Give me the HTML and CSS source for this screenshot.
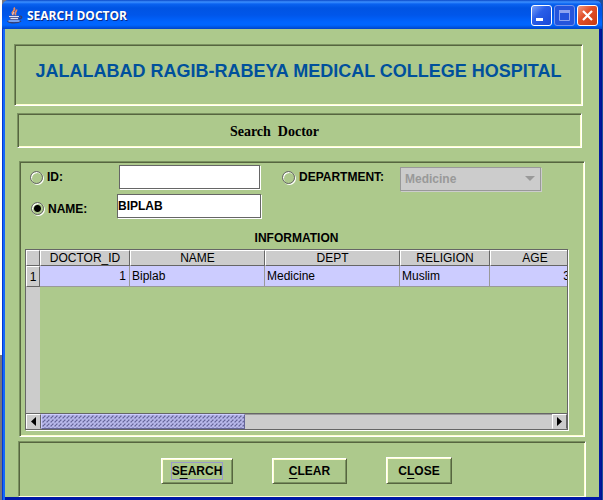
FILE: index.html
```html
<!DOCTYPE html>
<html lang="en">
<head>
<meta charset="utf-8">
<title>SEARCH DOCTOR</title>
<link rel="stylesheet" href="styles.css">
</head>
<body>
<div class="window">
  <header class="titlebar">
    <svg class="cup" viewBox="0 0 16 17" aria-hidden="true">
      <path d="M6.500 8C2.500 5 9.500 4 7 0.500M9 8C6.500 6 10 5 9.500 2.500" fill="none" stroke="#f08a5a" stroke-width="1.700"/>
      <path d="M5.500 7.500L7 5" stroke="#ffe0d0" stroke-width="1"/>
      <path d="M1.500 8.500H12L11 13H3.500Z" fill="#56609a"/>
      <path d="M2 9.500H12M3.500 11.500H11" stroke="#dfe1f2" stroke-width="1"/>
      <path d="M12 9.500C16 8 15.500 12 11.500 12" fill="none" stroke="#38406e" stroke-width="1.300"/>
      <path d="M0.500 14C3 16.500 11 16.500 14 14" fill="none" stroke="#353f72" stroke-width="1.400"/>
      <path d="M1.500 14H12.500" stroke="#c6cbe6" stroke-width="1.200"/>
    </svg>
    <span class="title">SEARCH DOCTOR</span>
    <button class="wbtn" aria-label="Minimize"><svg viewBox="0 0 19 19"><path d="M4 12H11V15H4Z" fill="#fff"/></svg></button>
    <button class="wbtn wbtn-off" aria-label="Maximize" disabled><svg viewBox="0 0 19 19"><path d="M4.500 5.500H14.500V14.500H4.500ZM4 6H15" fill="none" stroke="#8da4f0"/><path d="M4 4H15V7H4Z" fill="#8da4f0"/></svg></button>
    <button class="wbtn wbtn-close" aria-label="Close window"><svg viewBox="0 0 19 19"><path d="M5 5L14 14M14 5L5 14" stroke="#fff" stroke-width="2.200"/></svg></button>
  </header>
  <main class="content">
    <section class="panel banner"><h1>JALALABAD RAGIB-RABEYA MEDICAL COLLEGE HOSPITAL</h1></section>
    <section class="panel subtitle"><h2>Search&nbsp; Doctor</h2></section>
    <section class="panel search">
      <div class="row">
        <label class="choice choice-main"><input type="radio" name="by">ID:</label>
        <input class="field" type="text" aria-label="ID">
        <label class="choice choice-dept"><input type="radio" name="by">DEPARTMENT:</label>
        <div class="combo">
          <select aria-label="Department" disabled><option>Medicine</option></select>
          <svg class="arrow" viewBox="0 0 10 5" aria-hidden="true"><path d="M0 0H10L5 5Z" fill="#999"/></svg>
        </div>
      </div>
      <div class="row row-name">
        <label class="choice choice-main"><input type="radio" name="by" checked>NAME:</label>
        <input class="field field-name" type="text" aria-label="Name" value="BIPLAB">
      </div>
      <h3>INFORMATION</h3>
      <div class="pane">
        <div class="viewport">
          <table>
            <colgroup><col class="c-num"><col class="c-short"><col class="c-long"><col class="c-long"><col class="c-short"><col class="c-short"></colgroup>
            <thead><tr><th></th><th>DOCTOR_ID</th><th>NAME</th><th>DEPT</th><th>RELIGION</th><th>AGE</th></tr></thead>
            <tbody><tr><th>1</th><td class="num">1</td><td>Biplab</td><td>Medicine</td><td>Muslim</td><td class="num age">3</td></tr></tbody>
          </table>
          <div class="gutter"></div>
        </div>
        <div class="scrollbar">
          <button class="sbtn" aria-label="Scroll left"><svg viewBox="0 0 5 9"><path d="M5 0V9L0 4.500Z"/></svg></button>
          <div class="track"><div class="thumb"></div></div>
          <button class="sbtn" aria-label="Scroll right"><svg viewBox="0 0 5 9"><path d="M0 0V9L5 4.500Z"/></svg></button>
        </div>
      </div>
    </section>
    <section class="panel actions">
      <button class="btn btn-search"><span class="focus">S<u>E</u>ARCH</span></button>
      <button class="btn btn-clear"><u>C</u>LEAR</button>
      <button class="btn btn-close">C<u>L</u>OSE</button>
    </section>
  </main>
</div>
</body>
</html>
```
FILE: styles.css
```css
* { box-sizing: border-box; }
html {
  background: linear-gradient(90deg, #fff 2px, transparent 2px) 0 0 / 100% 355px no-repeat,
    linear-gradient(90deg, #77777f 50%, #1c4f9c 50%);
}
body {
  margin: 0;
  font: bold 12px "Liberation Sans", Arial, sans-serif;
  color: #000;
}
button, input, select { font: inherit; color: inherit; margin: 0; padding: 0; }
h1, h2, h3 { margin: 0; text-align: center; }

.window {
  display: flex;
  flex-direction: column;
  min-height: 100vh;
  margin: 0 1px 0 2px;
  border-radius: 7px 7px 0 0;
  background: linear-gradient(90deg, #0038d8 1px, #1468f8 1px 50%, #0038c8 50%, #0018a0 calc(100% - 1px), #001080);
}
.titlebar {
  display: flex;
  align-items: center;
  height: 29px;
  padding: 2px 4px 0 5px;
  border-radius: 7px 7px 0 0;
  background: linear-gradient(#0a48c8 0, #3c90ff 2px, #0a62f0 4px, #0054e3 8px, #0056ea 15px, #0064ff 22px, #0066ff 25px, #0044c8 29px);
}
.cup { width: 16px; height: 17px; }
.title {
  flex: 1;
  margin-left: 4px;
  font: bold 12px "Open Sans", sans-serif;
  color: #fff;
  text-shadow: 1px 1px #0a2a86;
}
.wbtn {
  width: 21px;
  height: 21px;
  margin-left: 2px;
  border: 1px solid #fff;
  border-radius: 3px;
  background: linear-gradient(135deg, #7aa0f8, #2a5ee8 40%, #1848d8);
}
.wbtn svg { display: block; width: 19px; height: 19px; }
.wbtn-off { border-color: #7494ee; background: #2454dc; }
.wbtn-close { background: linear-gradient(135deg, #f09a80, #e2502a 40%, #c83a10); }

.content {
  flex: 1;
  display: flex;
  flex-direction: column;
  margin: 0 3px;
  padding: 15px 13px 0 9px;
  border-bottom: 3px solid #0018a8;
  background: #adc98c;
}
.panel {
  border: 1px solid;
  border-color: #7a9160 #fff #fff #7a9160;
  box-shadow: inset 1px 1px #56653f, inset -1px -1px #ffffd0;
}
.banner { height: 62px; margin-right: 3px; padding: 16px 1px 0; }
.banner h1 { font-size: 18px; line-height: 21px; color: #00509c; white-space: nowrap; }
.subtitle { height: 35px; margin: 7px 4px 0 3px; }
.subtitle h2 { margin-right: 50px; font: bold 14px/35px "Liberation Serif", serif; }
.search { margin: 13px 1px 0 5px; padding: 3px 16px 6px 5px; }
.row { display: flex; padding-left: 5px; height: 29px; }
.row-name { padding-left: 6px; height: 36px; }
.choice { display: flex; align-items: center; gap: 4px; height: 24px; white-space: nowrap; }
.choice-main { width: 89px; }
.row-name .choice-main { width: 86px; height: 29px; }
.choice-dept { width: 118px; margin-left: 22px; }
.choice input {
  appearance: none;
  width: 13px;
  height: 13px;
  border: 1px solid #666;
  border-radius: 50%;
  box-shadow: 1px 1px #fff, inset 1px 1px #fff;
}
.choice input:checked { background: radial-gradient(circle, #000 3px, transparent 4px); }
.field {
  width: 141px;
  height: 24px;
  border: 1px solid #666;
  border-radius: 0;
  outline: 0;
  background: #fff;
  box-shadow: inset -1px -1px #fff, 1px 1px #fff;
}
.field-name { width: 144px; }
.combo { position: relative; width: 141px; height: 24px; margin-top: 2px; }
.combo select {
  appearance: none;
  width: 100%;
  height: 100%;
  padding-left: 4px;
  border: 1px solid #999;
  border-radius: 0;
  background: #ccc;
  box-shadow: 1px 1px #ccc;
  color: #999;
  opacity: 1;
}
.arrow { position: absolute; right: 6px; top: 9px; width: 10px; height: 5px; }
.search h3 { font-size: 12px; line-height: 16px; margin-bottom: 3px; }

.pane { border: 1px solid #666; box-shadow: 1px 1px #fff; }
.viewport { display: flex; flex-direction: column; height: 163px; overflow: hidden; }
table { width: 554px; table-layout: fixed; border-collapse: separate; border-spacing: 0; font-weight: normal; }
.c-num { width: 14px; }
.c-short { width: 90px; }
.c-long { width: 135px; }
th, td { padding: 0; line-height: 14px; }
th {
  height: 16px;
  border: 1px solid;
  border-color: #fff #666 #666 #fff;
  background: #ccc;
  font-weight: normal;
}
td, tbody th { height: 21px; }
td { padding-left: 2px; border: solid #999; border-width: 0 1px 1px 0; background: #ccf; }
.num { padding: 0 3px 0 0; text-align: right; }
.age { padding-right: 9px; }
.gutter { flex: 1; width: 14px; background: #ccc; }
.scrollbar { display: flex; height: 16px; border-top: 1px solid #666; }
.sbtn {
  display: flex;
  align-items: center;
  justify-content: center;
  width: 15px;
  border: 1px solid;
  border-color: #fff #666 #ccc #fff;
  background: #ccc;
}
.sbtn svg { width: 5px; height: 9px; }
.track { flex: 1; background: #ccc; box-shadow: inset 0 1px #999; }
.thumb {
  width: 40%;
  height: 100%;
  border: 1px solid;
  border-color: #ccf #669 #669 #ccf;
  background: radial-gradient(circle at 1px 1px, #ccf 0.500px, transparent 1px) 0 0 / 4px 4px,
    radial-gradient(circle at 1px 1px, #ccf 0.500px, transparent 1px) 2px 2px / 4px 4px,
    radial-gradient(circle at 2px 2px, #669 1px, transparent 1px) 0 0 / 4px 4px,
    #99c;
}

.actions {
  flex: 1;
  display: flex;
  align-items: flex-end;
  margin: 4px 0 0 4px;
  padding: 0 0 12px 142px;
  border-bottom-color: #ffffd8;
  box-shadow: inset 1px 1px #56653f, inset -1px 0 #ffffd0;
}
.btn {
  height: 26px;
  border: 1px solid;
  border-color: #fff #56653f #56653f #fff;
  box-shadow: inset 1px 1px #ffffd0, inset -1px -1px #7a9160;
  background: #adc98c;
}
.btn u { text-underline-offset: 3px; }
.btn-search { width: 72px; }
.btn-clear { width: 75px; margin-left: 39px; }
.btn-close { width: 66px; height: 27px; margin-left: 39px; }
.focus { display: inline-block; height: 18px; line-height: 16px; border: 1px solid #99c; }
```
